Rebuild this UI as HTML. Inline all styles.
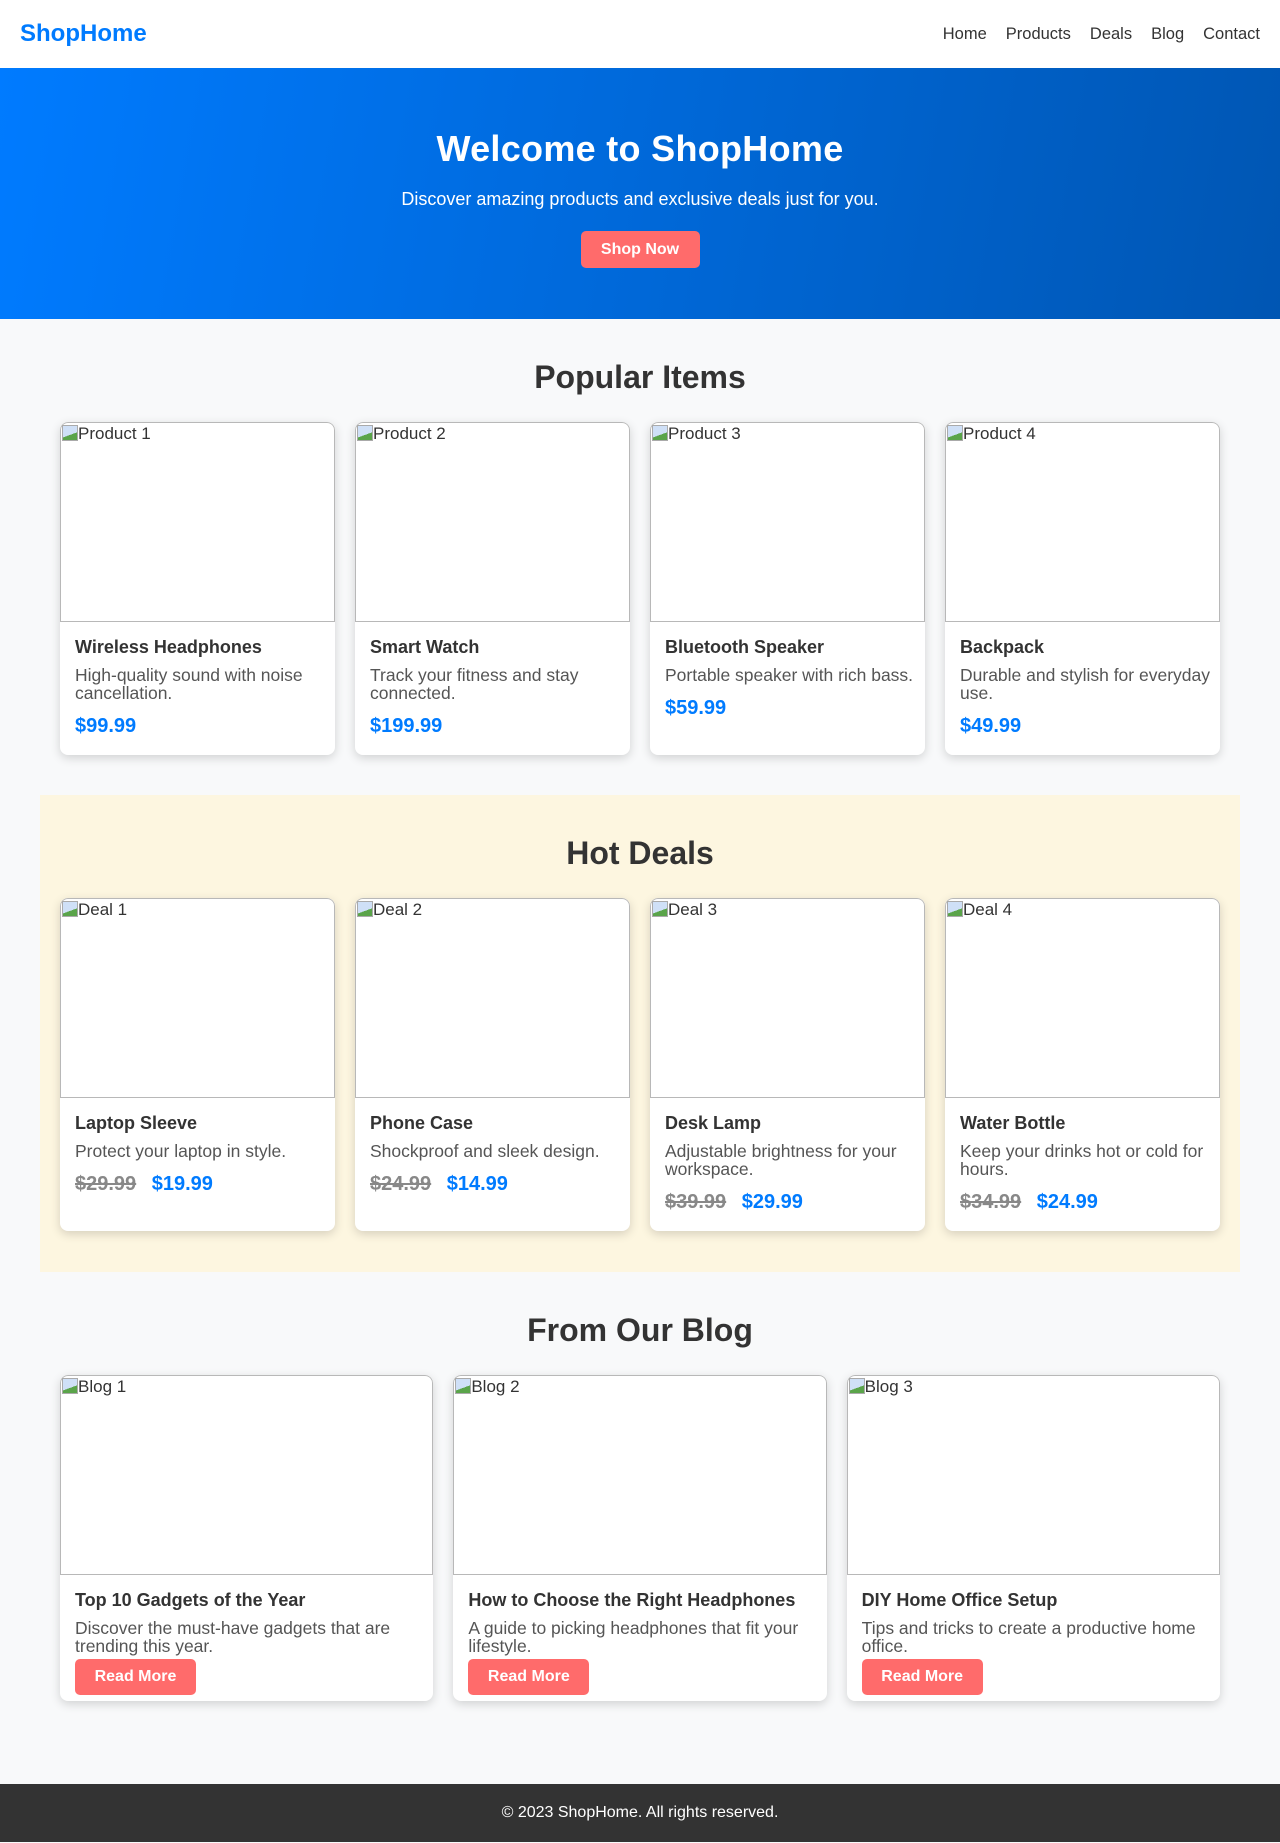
<!DOCTYPE html>
<html><head><meta charset="utf-8"><style>
*{box-sizing:border-box}
body{margin:0;background:#f8f9fa;font-family:"Liberation Sans",Arial,sans-serif;color:#333}
header{height:68px;background:#fff;display:flex;align-items:center;justify-content:space-between;padding:0 20px;box-shadow:0 1px 3px rgba(0,0,0,.08)}
.logo{color:#007bff;font-weight:bold;font-size:24px}
nav a{color:#333;text-decoration:none;font-size:16.5px;margin-left:19px}
.hero{height:251px;background:linear-gradient(100deg,#007bff,#0056b3);color:#fff;text-align:center;padding-top:58px}
.hero h1{margin:0;font-size:36px;line-height:46px;letter-spacing:.3px}
.hero p{margin:17px 0 21px;font-size:18px}
.btn{display:inline-block;background:#ff6b6b;color:#fff;font-weight:bold;border-radius:5px}
.hero .btn{width:119px;height:37px;line-height:37px;font-size:16px}
h2{margin:0 0 26px;text-align:center;font-size:32px;line-height:37px}
.wrap{width:1160px;margin:0 auto}
.grid{display:flex;gap:20px}
.card{flex:1;background:#fff;border-radius:8px;box-shadow:0 3px 10px rgba(0,0,0,.16);overflow:hidden}
.img{height:200px;border:1px solid #b8b8b8;border-radius:8px 8px 0 0;font-size:17px;padding:1px 0 0 1px;display:flex;align-items:flex-start}
.ic{display:inline-block;width:16px;height:16px;margin-top:1px;background:linear-gradient(160deg,#cfe0f7 60%,#5aa44a 60%);border:1px solid #aaa}
.body{padding:14px 0 17px 15px}
.body h3{margin:0 0 8px;font-size:18px;line-height:22px}
.body p{margin:0 0 12px;font-size:17.5px;line-height:18px;color:#555}
.price{font-size:20px;line-height:24px;font-weight:bold;color:#007bff}
.old{color:#888;text-decoration:line-through;margin-right:10px}
.pop{padding-top:40px;height:476px}
.deals{width:1200px;margin:0 auto;background:#fdf6e0;padding:40px 20px 40px;height:477px}
.blog{padding-top:40px;height:512px}
.blog .body{padding:14px 0 6px 15px}
.blog .body p{margin:0 0 4px}
.blog .btn{width:121px;height:36px;line-height:36px;text-align:center;font-size:16px}
footer{height:58px;background:#333;color:#fff;text-align:center;line-height:58px;font-size:16px}
</style></head><body>
<header><div class="logo">ShopHome</div><nav><a>Home</a><a>Products</a><a>Deals</a><a>Blog</a><a>Contact</a></nav></header>
<section class="hero"><h1>Welcome to ShopHome</h1><p>Discover amazing products and exclusive deals just for you.</p><span class="btn">Shop Now</span></section>
<section class="pop"><div class="wrap"><h2>Popular Items</h2><div class="grid">
<div class="card"><div class="img"><span class="ic"></span>Product 1</div><div class="body"><h3>Wireless Headphones</h3><p>High-quality sound with noise cancellation.</p><div class="price">$99.99</div></div></div>
<div class="card"><div class="img"><span class="ic"></span>Product 2</div><div class="body"><h3>Smart Watch</h3><p>Track your fitness and stay connected.</p><div class="price">$199.99</div></div></div>
<div class="card"><div class="img"><span class="ic"></span>Product 3</div><div class="body"><h3>Bluetooth Speaker</h3><p>Portable speaker with rich bass.</p><div class="price">$59.99</div></div></div>
<div class="card"><div class="img"><span class="ic"></span>Product 4</div><div class="body"><h3>Backpack</h3><p>Durable and stylish for everyday use.</p><div class="price">$49.99</div></div></div>
</div></div></section>
<section class="deals"><h2>Hot Deals</h2><div class="grid">
<div class="card"><div class="img"><span class="ic"></span>Deal 1</div><div class="body"><h3>Laptop Sleeve</h3><p>Protect your laptop in style.</p><div class="price"><span class="old">$29.99</span> $19.99</div></div></div>
<div class="card"><div class="img"><span class="ic"></span>Deal 2</div><div class="body"><h3>Phone Case</h3><p>Shockproof and sleek design.</p><div class="price"><span class="old">$24.99</span> $14.99</div></div></div>
<div class="card"><div class="img"><span class="ic"></span>Deal 3</div><div class="body"><h3>Desk Lamp</h3><p>Adjustable brightness for your workspace.</p><div class="price"><span class="old">$39.99</span> $29.99</div></div></div>
<div class="card"><div class="img"><span class="ic"></span>Deal 4</div><div class="body"><h3>Water Bottle</h3><p>Keep your drinks hot or cold for hours.</p><div class="price"><span class="old">$34.99</span> $24.99</div></div></div>
</div></section>
<section class="blog"><div class="wrap"><h2>From Our Blog</h2><div class="grid">
<div class="card"><div class="img"><span class="ic"></span>Blog 1</div><div class="body"><h3>Top 10 Gadgets of the Year</h3><p>Discover the must-have gadgets that are trending this year.</p><span class="btn">Read More</span></div></div>
<div class="card"><div class="img"><span class="ic"></span>Blog 2</div><div class="body"><h3>How to Choose the Right Headphones</h3><p>A guide to picking headphones that fit your lifestyle.</p><span class="btn">Read More</span></div></div>
<div class="card"><div class="img"><span class="ic"></span>Blog 3</div><div class="body"><h3>DIY Home Office Setup</h3><p>Tips and tricks to create a productive home office.</p><span class="btn">Read More</span></div></div>
</div></div></section>
<footer>© 2023 ShopHome. All rights reserved.</footer>
</body></html>
